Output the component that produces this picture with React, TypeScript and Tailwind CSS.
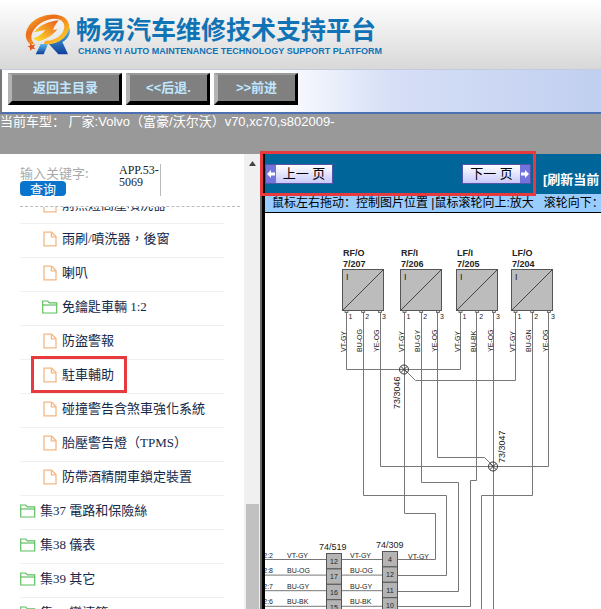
import React from "react";

// --- TYPES ---
interface TreeItem {
  label: string;
  kind: "file" | "folder";
  level: 1 | 2;
  marked?: boolean;
}

interface Sensor {
  x: number;
  side: string;
  code: string;
  wires: string[];
}

// --- DATA ---
const ITEMS: TreeItem[] = [
  { label: "前照燈高壓噴洗器", kind: "file", level: 2 },
  { label: "雨刷/噴洗器，後窗", kind: "file", level: 2 },
  { label: "喇叭", kind: "file", level: 2 },
  { label: "免鑰匙車輛 1:2", kind: "folder", level: 2 },
  { label: "防盜警報", kind: "file", level: 2 },
  { label: "駐車輔助", kind: "file", level: 2, marked: true },
  { label: "碰撞警告含煞車強化系統", kind: "file", level: 2 },
  { label: "胎壓警告燈（TPMS）", kind: "file", level: 2 },
  { label: "防帶酒精開車鎖定裝置", kind: "file", level: 2 },
  { label: "集37 電路和保險絲", kind: "folder", level: 1 },
  { label: "集38 儀表", kind: "folder", level: 1 },
  { label: "集39 其它", kind: "folder", level: 1 },
  { label: "集43 變速箱", kind: "folder", level: 1 },
];

const SENSORS: Sensor[] = [
  { x: 342, side: "RF/O", code: "7/207", wires: ["VT-GY", "BU-OG", "YE-OG"] },
  { x: 400, side: "RF/I", code: "7/206", wires: ["VT-GY", "BU-GY", "YE-OG"] },
  { x: 456, side: "LF/I", code: "7/205", wires: ["VT-GY", "BU-BK", "YE-OG"] },
  { x: 511, side: "LF/O", code: "7/204", wires: ["VT-GY", "BU-GN", "YE-OG"] },
];

const ROWS = [
  { wire: "VT-GY", left: "2:2", a: "12", b: "4" },
  { wire: "BU-OG", left: "2:8", a: "17", b: "12" },
  { wire: "BU-GY", left: "2:7", a: "16", b: "11" },
  { wire: "BU-BK", left: "2:6", a: "15", b: "10" },
];

// --- ICONS ---
const FileIcon = () => (
  <svg width="14" height="16" viewBox="0 0 14 16" fill="none" stroke="#f3b884" strokeWidth="1.3">
    <path d="M1 1.2h7.6L13 5.6v9.2H1z" />
    <path d="M8.4 1.2v4.6H13" />
  </svg>
);

const FolderIcon = () => (
  <svg width="16" height="14" viewBox="0 0 16 14" fill="none" stroke="#5fbf60" strokeWidth="1.2">
    <path d="M.7 13V1h5l1.6 1.8h7.4V13z" />
    <path d="M.7 5h14" />
  </svg>
);

const Logo = () => (
  <svg width="48" height="44" viewBox="42 24 144 132" aria-label="CHANG YI">
    <defs>
      <linearGradient id="ring" x1="0" y1="0" x2="1" y2="1">
        <stop offset="0" stopColor="#f9c62a" />
        <stop offset="0.35" stopColor="#ec6a1c" />
        <stop offset="0.65" stopColor="#f6a31e" />
        <stop offset="1" stopColor="#fde23c" />
      </linearGradient>
      <linearGradient id="bolt" x1="1" y1="0" x2="0" y2="1">
        <stop offset="0" stopColor="#ea5b1c" />
        <stop offset="1" stopColor="#ffe52e" />
      </linearGradient>
      <linearGradient id="leg" x1="0" y1="0" x2="0" y2="1">
        <stop offset="0" stopColor="#58b8e8" />
        <stop offset="1" stopColor="#0c3f9c" />
      </linearGradient>
    </defs>
    <path d="M92 117h22l-13 31H77z" fill="url(#leg)" />
    <path d="M116 116c26-3 46-16 54-36l9-12c3 20-6 34-22 43l17 37h-29z" fill="url(#leg)" />
    <path
      fillRule="evenodd"
      fill="url(#ring)"
      d="M63 120C42 106 42 76 64 53 91 27 142 20 165 39c25 21 11 61-29 75-12 4-24 5-35 3l5-10c32 1 56-19 57-42 0-21-23-29-51-20-31 10-52 36-47 58 1 5 4 9 8 12z"
    />
    <path d="M72 82C88 62 112 50 146 46c-8 10-13 18-17 29l13-2c-11 15-28 27-53 36-8-1-15-4-19-9 15-5 27-13 36-25z" fill="url(#bolt)" />
    <path d="M60 116l7 5 9-3-5 8 5 7-9-2-7 6 0-9-8-4 8-2z" fill="#e8541d" />
  </svg>
);

const ToolButton = ({ children, className }: { children: React.ReactNode; className: string }) => (
  <button
    className={`h-8 border-t-2 border-r-3 border-b-4 border-l-4 border-t-[#999] border-r-black border-b-black border-l-[#b3b3b3] bg-[#808080] text-[13px] leading-4 font-bold text-[#bfe6ff] ${className}`}
  >
    {children}
  </button>
);

// --- WIRING DIAGRAM ---
const WiringDiagram = () => (
  <svg
    width="336"
    height="396"
    viewBox="265 213 336 396"
    className="block shrink-0 font-['Liberation_Sans',Arial,sans-serif]"
    fill="#222"
  >
    <g fill="none" stroke="#777" strokeWidth="1">
      <path d="M346.5 311V369.5H460.5V311" />
      <path d="M404.5 369.5L415.5 380.5H515.5V311" />
      <path d="M363.5 311V495.5H446.5V575.5H398" />
      <path d="M380.5 311V466.5H548.5V311" />
      <path d="M404.5 311V513.5H435.5V559.5H398" />
      <path d="M421.5 311V482.5H458.5V591.5H398" />
      <path d="M437.5 311V457.5H484.5L493.5 466.5" />
      <path d="M476.5 311V480.5H470.5V606.5H398" />
      <path d="M493.5 311V609" />
      <path d="M532.5 311V495.5H481.5V609" />
    </g>

    {SENSORS.map((s) => (
      <g key={s.code}>
        <text x={s.x + 1} y="256" fontSize="9" fontWeight="bold">{s.side}</text>
        <text x={s.x + 1} y="267" fontSize="9" fontWeight="bold">{s.code}</text>
        <rect x={s.x + 0.5} y="269.5" width="41" height="41" fill="#bcbcbc" stroke="#555" />
        <path d={`M${s.x + 0.5} 310.5l41-41`} stroke="#444" />
        <text x={s.x + 4} y="280" fontSize="9">I</text>
        {s.wires.map((w, i) => {
          const px = s.x + 4.5 + i * 16.7;
          return (
            <g key={w + i}>
              <rect x={px - 1.5} y="310.5" width="3" height="2" fill="#ddd" stroke="#555" strokeWidth="0.8" />
              <text x={px + 2} y="319" fontSize="7">{i + 1}</text>
              <text transform={`translate(${px - 1} 352) rotate(-90)`} fontSize="7">{w}</text>
            </g>
          );
        })}
      </g>
    ))}

    {[[404, 369.5], [493, 466.5]].map(([x, y]) => (
      <g key={x} fill="none" stroke="#333">
        <circle cx={x} cy={y} r="4.5" />
        <path d={`M${x - 3} ${y - 3}l6 6M${x + 3} ${y - 3}l-6 6`} />
      </g>
    ))}
    <text transform="translate(400 409) rotate(-90)" fontSize="9">73/3046</text>
    <text transform="translate(505 463) rotate(-90)" fontSize="9">73/3047</text>

    <text x="319" y="550" fontSize="9">74/519</text>
    <text x="376" y="548" fontSize="9">74/309</text>
    {ROWS.map((r, i) => {
      const y = 559.5 + i * 15.6;
      return (
        <g key={r.wire} fontSize="7">
          <path d={`M265 ${y}H326M341 ${y}H382`} stroke="#777" />
          <rect x="326.5" y={553.5 + i * 15.4} width="15" height="15.4" fill="#b4b4b4" stroke="#555" />
          <rect x="382.5" y={551.5 + i * 15.4} width="15" height="15.4" fill="#b4b4b4" stroke="#555" />
          <text x="334" y={564 + i * 15.4} textAnchor="middle">{r.a}</text>
          <text x="390" y={562 + i * 15.4} textAnchor="middle">{r.b}</text>
          <text x="273" y={y - 2} textAnchor="end">{r.left}</text>
          <text x="287" y={y - 2}>{r.wire}</text>
          <text x="350" y={y - 2}>{r.wire}</text>
          {i === 0 && <text x="408" y={y - 1}>{r.wire}</text>}
        </g>
      );
    })}
  </svg>
);

const App: React.FC = () => {
  return (
    <div className="flex h-screen w-full flex-col overflow-hidden bg-white font-['Liberation_Sans','Noto_Sans_CJK_SC',sans-serif]">
      {/* Brand */}
      <header className="flex shrink-0 items-start gap-1 bg-linear-to-b from-white to-[#d8d8d8] pt-[13px] pb-3 pl-6">
        <Logo />
        <div className="pt-[3px] text-[#0f73b5]">
          <h1 className="text-[25px] leading-7 font-bold whitespace-nowrap">畅易汽车维修技术支持平台</h1>
          <p className="pt-[1px] pl-0.5 text-[9px] leading-3 font-bold whitespace-nowrap">
            CHANG YI AUTO MAINTENANCE TECHNOLOGY SUPPORT PLATFORM
          </p>
        </div>
      </header>

      {/* Toolbar */}
      <nav className="flex h-[45px] shrink-0 gap-1 border-t border-b-2 border-l-2 border-t-[#c3cbdc] border-b-[#4d70b5] border-l-[#777] bg-linear-to-r from-white from-45% via-[#d6dff6] via-65% to-[#c1cff0] pt-[3px] pl-1.5">
        <ToolButton className="w-[114px]">返回主目录</ToolButton>
        <ToolButton className="w-[84px]">&lt;&lt;后退.</ToolButton>
        <ToolButton className="w-[84px]">&gt;&gt;前进</ToolButton>
      </nav>

      <div className="h-10 shrink-0 bg-[#999] text-[13px] leading-4 whitespace-nowrap text-white">
        当前车型： 厂家:Volvo（富豪/沃尔沃）v70,xc70,s802009-
      </div>

      <div className="flex min-h-0 flex-1">
        {/* Sidebar */}
        <aside className="flex w-[260px] shrink-0 font-['Liberation_Serif','Noto_Sans_CJK_TC',serif]">
          <div className="flex min-w-0 flex-1 flex-col pl-5">
            <form className="mr-1 flex h-[53px] shrink-0 items-start border-b border-dashed border-[#bbb] pt-[10px]">
              <div className="flex w-[99px] flex-col items-start">
                <input
                  type="text"
                  aria-label="输入关键字"
                  placeholder="输入关键字:"
                  className="h-[17px] w-[70px] p-0 font-['Noto_Sans_CJK_SC',sans-serif] text-[13px] leading-4 outline-none placeholder:text-[#aaa]"
                />
                <button
                  type="button"
                  className="h-[15px] w-[46px] rounded-sm bg-[#0a74cc] font-['Noto_Sans_CJK_SC',sans-serif] text-[13px] leading-[15px] text-white"
                >
                  查询
                </button>
              </div>
              <div className="h-8 w-[42px] border-r border-[#bbb] text-[12px] leading-3 text-[#222]">
                APP.53-
                <br />
                5069
              </div>
            </form>

            <div className="min-h-0 flex-1 overflow-hidden">
              <ul className="-mt-[17px] mr-5">
                {ITEMS.map((item) => (
                  <li
                    key={item.label}
                    className={`relative flex h-[34px] items-center border-b border-[#f0f0f0] pb-1 ${item.level === 2 ? "pl-[22px]" : ""}`}
                  >
                    <a href="#" className="flex items-center gap-1 text-[13px] leading-5 whitespace-nowrap text-[#14294a]">
                      <span className="flex w-4 justify-center">
                        {item.kind === "file" ? <FileIcon /> : <FolderIcon />}
                      </span>
                      {item.label}
                    </a>
                    {item.marked && (
                      <span className="absolute -top-1 left-[11px] h-[37px] w-24 border-3 border-[#e83a3e]" />
                    )}
                  </li>
                ))}
              </ul>
            </div>
          </div>

          {/* Scrollbar */}
          <div className="flex w-4 shrink-0 flex-col items-center bg-[#f0f0f0] pt-[7px]">
            <svg width="7" height="5" viewBox="0 0 7 5" fill="#444">
              <path d="M0 5L3.5 0 7 5z" />
            </svg>
            <div className="h-0 flex-[16]" />
            <div className="w-[13px] flex-[5] bg-[#c1c1c1]" />
          </div>
        </aside>

        {/* Viewer */}
        <main className="relative flex min-w-0 flex-1 flex-col border-l-2 border-[#666]">
          <div className="flex min-h-0 flex-1 flex-col overflow-hidden border-l-3 border-black font-['Liberation_Sans','Noto_Sans_CJK_SC',sans-serif]">
            <div className="flex h-10 shrink-0 items-center bg-[#006699]">
              <button className="flex h-5 w-[68px] shrink-0 items-center border border-[#5454a8] bg-linear-to-b from-white to-[#c9c9fa] text-[13px] leading-4 text-black">
                <svg width="10" height="18" viewBox="0 0 10 18">
                  <path d="M0 0h10v18H0z" fill="#7373dc" />
                  <path d="M1 9l4-4v2.5h4v3H5V13z" fill="#fff" />
                </svg>
                <span className="flex-1 text-center">上一 页</span>
              </button>
              <button className="ml-[129px] flex h-5 w-[69px] shrink-0 items-center border border-[#5454a8] bg-linear-to-b from-white to-[#c9c9fa] text-[13px] leading-4 text-black">
                <span className="flex-1 text-center">下一 页</span>
                <svg width="10" height="18" viewBox="0 0 10 18">
                  <path d="M0 0h10v18H0z" fill="#7373dc" />
                  <path d="M9 9L5 5v2.5H1v3h4V13z" fill="#fff" />
                </svg>
              </button>
              <a href="#" className="ml-3 pt-3 text-[13px] leading-4 font-bold whitespace-nowrap text-white">
                [刷新当前
              </a>
            </div>

            <div className="flex h-[19px] shrink-0 gap-[10px] border-b border-black bg-[#99ccff] pl-[7px] text-[12px] leading-[18px] whitespace-nowrap text-black">
              <span>鼠标左右拖动：控制图片位置 |鼠标滚轮向上:放大</span>
              <span>滚轮向下：</span>
            </div>

            <div className="flex min-h-0 flex-1 items-start overflow-hidden bg-white">
              <WiringDiagram />
            </div>
          </div>
          <span className="absolute -top-[3px] -left-0.5 h-[45px] w-[276px] border-3 border-[#e83a3e]" />
        </main>
      </div>
    </div>
  );
};

export default App;
